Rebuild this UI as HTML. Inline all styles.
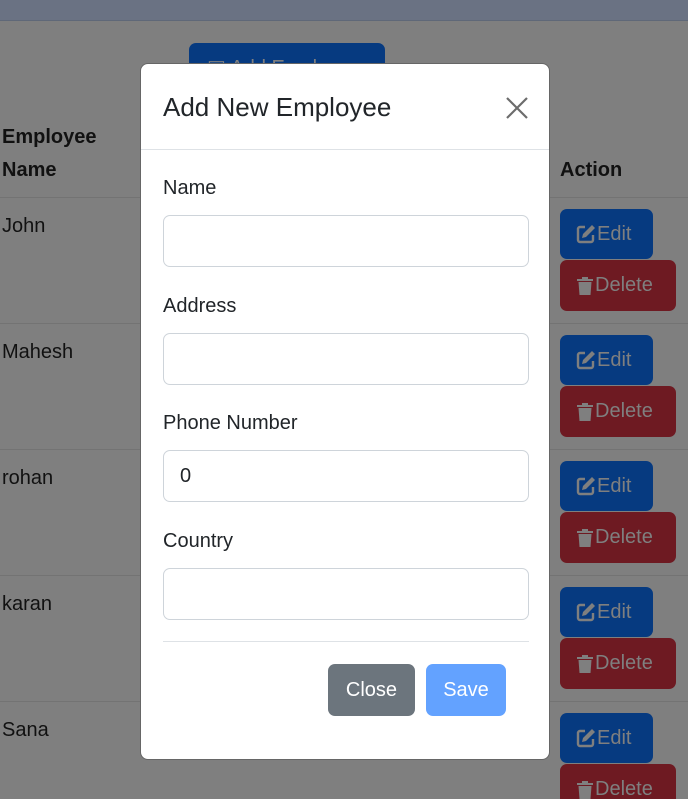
<!DOCTYPE html>
<html><head><style>
*{box-sizing:border-box;margin:0;padding:0}
html,body{width:688px;height:799px;overflow:hidden}
body{background:#7f7f7f;font-family:"Liberation Sans",sans-serif;position:relative;color:#111}
.top{position:absolute;left:0;top:0;width:688px;height:21px;background:#6a7283;border-bottom:1px solid #5f6878}
.addbtn{position:absolute;left:189px;top:43px;width:196px;height:50px;background:#063a80;border-radius:7px;color:#7f7f7f;font-size:20px;padding:12px 0 0 18px;overflow:hidden}
.th{position:absolute;font-weight:bold;font-size:20px;line-height:33px;color:#111}
.line{position:absolute;left:0;width:688px;height:1px;background:#737373}
.name{position:absolute;left:2px;font-size:20px;color:#111}
.edit{position:absolute;left:560px;width:93px;height:50px;background:#063a80;border-radius:7px;color:#7f7f7f;font-size:20px;line-height:50px;padding-left:16px;display:flex;align-items:center}
.del{position:absolute;left:560px;width:116px;height:51px;background:#6e1a22;border-radius:7px;color:#7f7f7f;font-size:20px;line-height:51px;padding-left:16px;display:flex;align-items:center}
.edit svg,.del svg{margin-right:1px}
.modal{position:absolute;left:140px;top:63px;width:410px;height:697px;background:#fff;border-radius:8px;border:1px solid #666}
.hdr{height:86px;border-bottom:1px solid #dee2e6;position:relative}
.title{position:absolute;left:22px;top:28px;font-size:26px;color:#212529}
.x{position:absolute;left:364px;top:32px}
.lbl{position:absolute;left:22px;font-size:20px;color:#212529}
.inp{position:absolute;left:22px;width:366px;height:52px;border:1px solid #ced4da;border-radius:7px;font-size:20px;color:#212529;padding:15px 16px;line-height:20px}
.fl{position:absolute;left:22px;top:577px;width:366px;height:1px;background:#dee2e6}
.b{position:absolute;top:600px;height:52px;border-radius:7px;color:#fff;font-size:20px;line-height:52px;text-align:center}
</style></head><body>
<div class="top"></div>
<div class="addbtn">▣ Add Employee</div>
<div class="th" style="left:2px;top:121px">Employee<br>Name</div>
<div class="th" style="left:560px;top:154px">Action</div>
<div class="line" style="top:197px"></div>
<div class="line" style="top:323px"></div>
<div class="line" style="top:449px"></div>
<div class="line" style="top:575px"></div>
<div class="line" style="top:701px"></div>
<div class="name" style="top:215px">John</div>
<div class="name" style="top:341px">Mahesh</div>
<div class="name" style="top:467px">rohan</div>
<div class="name" style="top:593px">karan</div>
<div class="name" style="top:719px">Sana</div>
<svg width="0" height="0" style="position:absolute"><defs>
<symbol id="ed" viewBox="0 0 20 20"><path d="M9 3H4a2 2 0 0 0-2 2v11a2 2 0 0 0 2 2h11a2 2 0 0 0 2-2v-5" fill="none" stroke="#7f7f7f" stroke-width="2.4"/><path d="M16 1l3 3-9 9-4 1 1-4z" fill="#7f7f7f"/></symbol>
<symbol id="tr" viewBox="0 0 18 20"><path d="M1 3h16v2H1zM6 1h6v2H6zM2.5 6h13l-1 13h-11z" fill="#7f7f7f"/></symbol>
</defs></svg>
<div class="edit" style="top:209px"><svg width="20" height="20"><use href="#ed"/></svg>Edit</div><div class="del" style="top:260px"><svg width="18" height="20"><use href="#tr"/></svg>Delete</div>
<div class="edit" style="top:335px"><svg width="20" height="20"><use href="#ed"/></svg>Edit</div><div class="del" style="top:386px"><svg width="18" height="20"><use href="#tr"/></svg>Delete</div>
<div class="edit" style="top:461px"><svg width="20" height="20"><use href="#ed"/></svg>Edit</div><div class="del" style="top:512px"><svg width="18" height="20"><use href="#tr"/></svg>Delete</div>
<div class="edit" style="top:587px"><svg width="20" height="20"><use href="#ed"/></svg>Edit</div><div class="del" style="top:638px"><svg width="18" height="20"><use href="#tr"/></svg>Delete</div>
<div class="edit" style="top:713px"><svg width="20" height="20"><use href="#ed"/></svg>Edit</div><div class="del" style="top:764px"><svg width="18" height="20"><use href="#tr"/></svg>Delete</div>
<div class="modal">
<div class="hdr"><div class="title">Add New Employee</div>
<svg class="x" width="24" height="24" viewBox="0 0 24 24"><path d="M2 2L22 22M22 2L2 22" stroke="#6c6c6c" stroke-width="2.2"/></svg></div>
<div class="lbl" style="top:113px">Name</div>
<div class="inp" style="top:151px"></div>
<div class="lbl" style="top:231px">Address</div>
<div class="inp" style="top:269px"></div>
<div class="lbl" style="top:348px">Phone Number</div>
<div class="inp" style="top:386px">0</div>
<div class="lbl" style="top:466px">Country</div>
<div class="inp" style="top:504px"></div>
<div class="fl"></div>
<div class="b" style="left:187px;width:87px;background:#6c757d">Close</div>
<div class="b" style="left:285px;width:80px;background:#63a2ff">Save</div>
</div>
</body></html>
